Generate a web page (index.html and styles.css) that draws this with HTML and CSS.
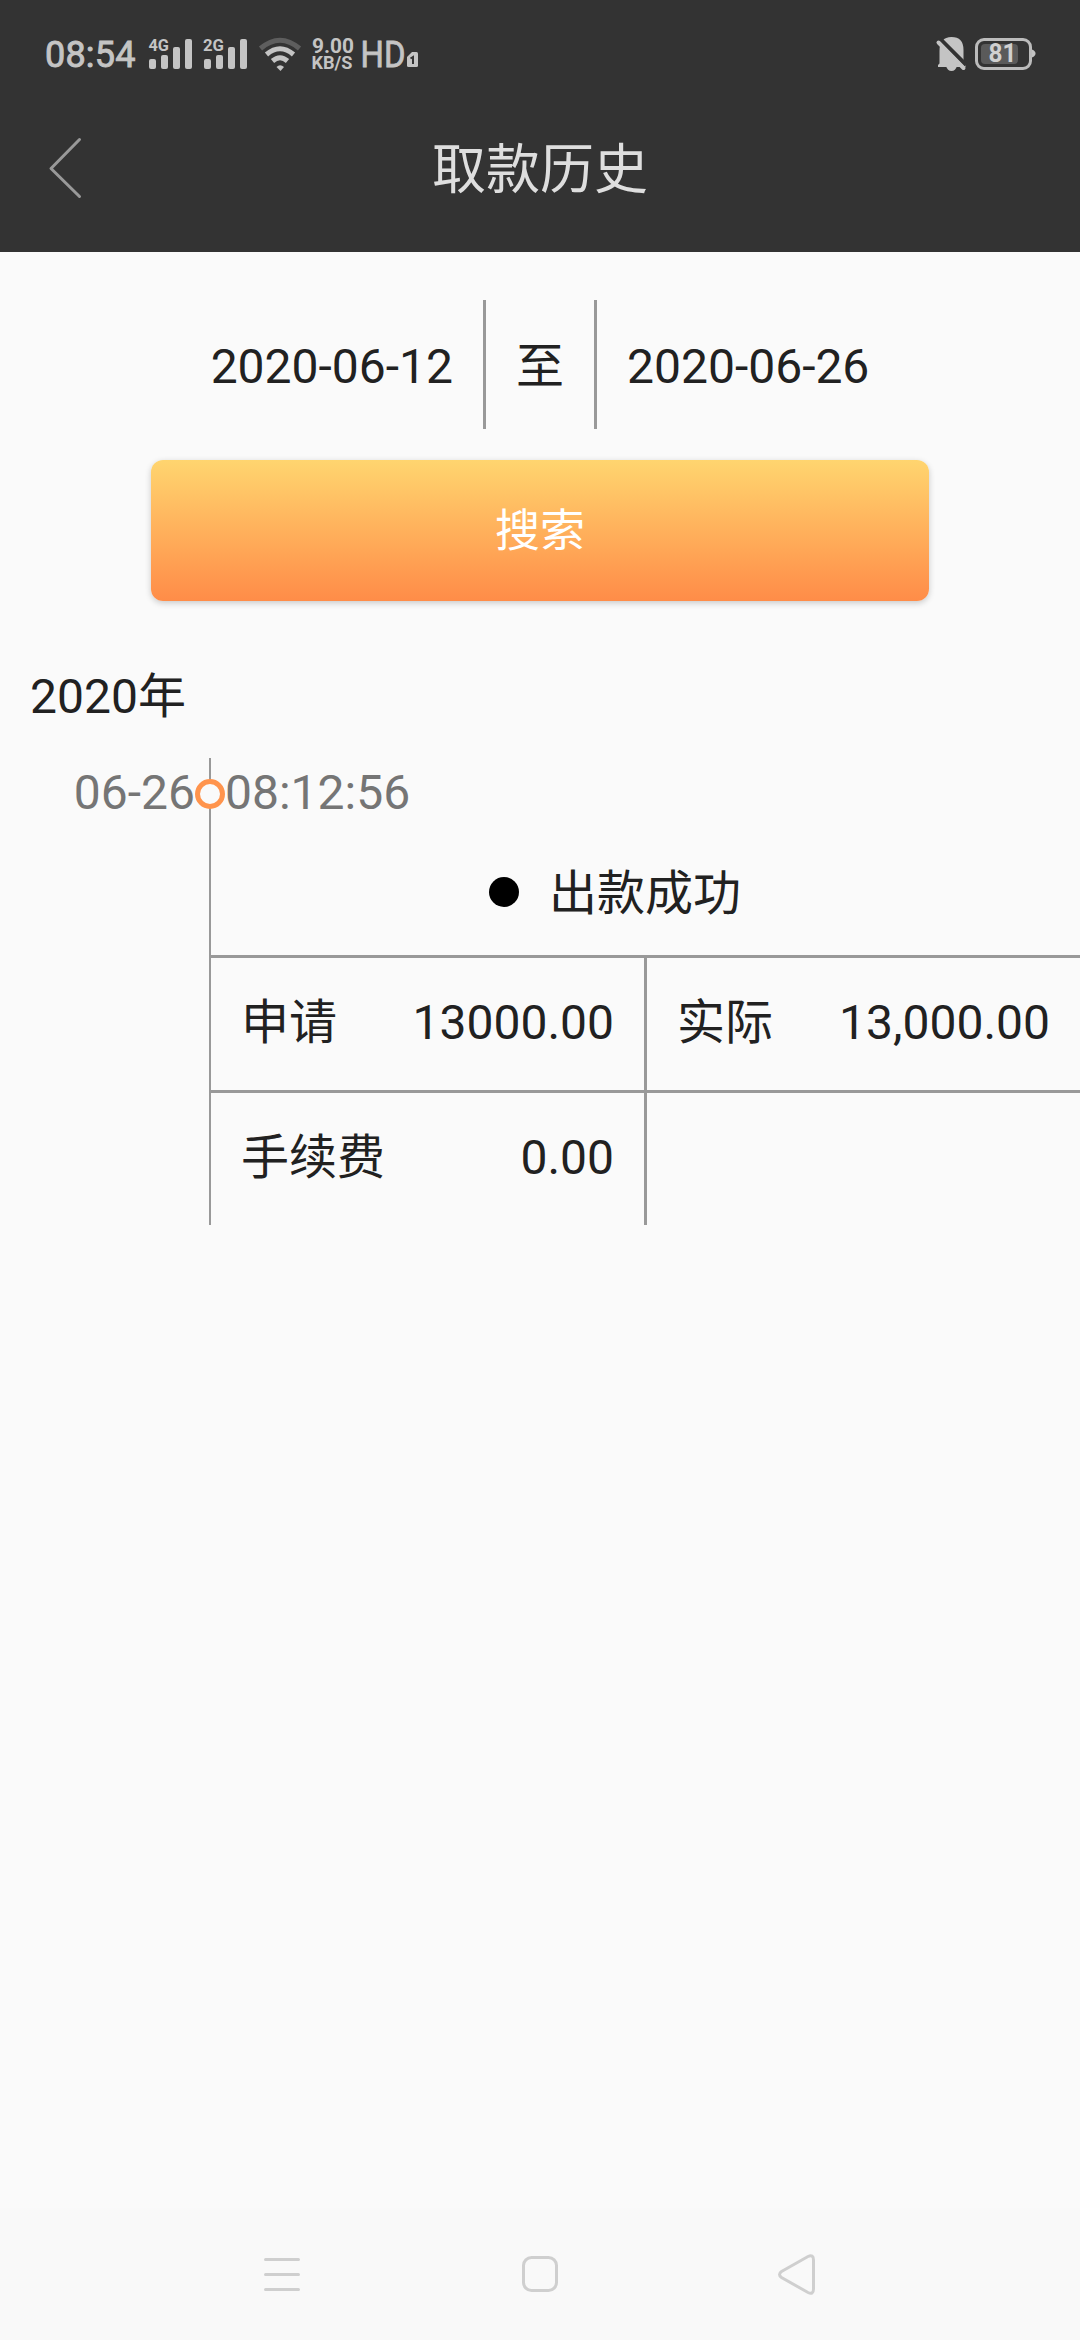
FILE: index.html
```html
<!DOCTYPE html>
<html lang="zh-CN">
<head>
<meta charset="utf-8">
<title>取款历史</title>
<link rel="stylesheet" href="styles.css">
</head>
<body>
<div class="screen">
  <header class="header">
    <div class="status-bar">
      <span class="clock">08:54</span>
      <svg class="signal" width="54" height="84" viewBox="145 0 54 84">
        <text class="net" x="148.500" y="51" textLength="20.500" lengthAdjust="spacingAndGlyphs">4G</text>
        <rect x="149" y="59" width="7" height="10" rx="2"/><rect x="161" y="55" width="7" height="14" rx="2"/><rect x="173" y="47" width="7" height="22" rx="2"/><rect x="185" y="39" width="7" height="30" rx="2"/>
      </svg>
      <svg class="signal" width="54" height="84" viewBox="144 0 54 84">
        <text class="net" x="148" y="51" textLength="21" lengthAdjust="spacingAndGlyphs">2G</text>
        <rect x="149" y="59" width="7" height="10" rx="2"/><rect x="161" y="55" width="7" height="14" rx="2"/><rect x="173" y="47" width="7" height="22" rx="2"/><rect x="185" y="39" width="7" height="30" rx="2"/>
      </svg>
      <svg class="wifi" width="54" height="84" viewBox="253 0 54 84">
        <path class="wifi-dim" d="M260.500 48.500Q280 32 299.500 48.500"/>
        <path class="wifi-arc" d="M266.500 54.500Q280 43 293.500 54.500"/>
        <path class="wifi-arc" d="M272.500 61Q280 54.500 287.500 61"/>
        <path d="M276.500 67Q280 63.500 284 67L280.500 71Z"/>
      </svg>
      <svg class="speed" width="50" height="84" viewBox="307 0 50 84">
        <text class="rate" x="312" y="53" textLength="42" lengthAdjust="spacingAndGlyphs">9.00</text>
        <text class="unit" x="311.500" y="69" textLength="41" lengthAdjust="spacingAndGlyphs">KB/S</text>
      </svg>
      <svg class="volte" width="66" height="84" viewBox="357 0 66 84">
        <text class="hd" x="360.500" y="67" textLength="45" lengthAdjust="spacingAndGlyphs">HD</text>
        <path d="M412 52H416.500Q418 52 418 53.500V65.500Q418 67 416.500 67H408.500Q407 67 407 65.500V57Z"/>
        <path class="sim" d="M410.500 58.500L413 57V64"/>
      </svg>
      <svg class="bell" width="37" height="84" viewBox="934 0 37 84">
        <path d="M939.500 63.500V51Q939.500 37 951.500 37Q963.500 37 963.500 50V63L965.500 65.500V67H938V65Z"/>
        <path d="M946 66H957Q955.500 71 951.500 71Q947.500 71 946 66Z"/>
        <path class="cut" d="M939 38L966 65"/>
        <path class="slash" d="M938.500 42.500L963.500 68"/>
      </svg>
      <svg class="battery" width="69" height="84" viewBox="971 0 69 84">
        <rect class="case" x="976.500" y="39.500" width="54" height="29" rx="7.500"/>
        <rect class="charge" x="981" y="44" width="37" height="20" rx="4"/>
        <path d="M1032 49.500Q1035.500 51 1035.500 53.500Q1035.500 56 1032 57.500Z"/>
        <text class="level" x="988.500" y="62" textLength="28" lengthAdjust="spacingAndGlyphs">81</text>
      </svg>
    </div>
    <div class="app-bar">
      <svg class="back" width="36" height="64" viewBox="0 0 36 64"><path d="M32.500 3.500L4 32.500L32.500 60.500"/></svg>
      <h1 class="title">取款历史</h1>
    </div>
  </header>
  <main class="content">
    <div class="range">
      <span class="date">2020-06-12</span>
      <span class="to">至</span>
      <span class="date">2020-06-26</span>
    </div>
    <button class="search">搜索</button>
    <h2 class="year">2020年</h2>
    <section class="record">
      <div class="moment">
        <span class="day">06-26</span>
        <span class="rail"><span class="node"></span></span>
        <span class="time">08:12:56</span>
      </div>
      <div class="detail">
        <div class="state"><span class="dot"></span><span class="state-text">出款成功</span></div>
        <div class="grid">
          <div class="cell"><span>申请</span><span>13000.00</span></div>
          <div class="cell"><span>实际</span><span>13,000.00</span></div>
          <div class="cell"><span>手续费</span><span>0.00</span></div>
          <div class="cell"></div>
        </div>
      </div>
    </section>
  </main>
  <nav class="nav-bar">
    <svg width="44" height="44" viewBox="-4 -4 44 44"><path d="M1.500 3.500H34.500M1.500 18.500H34.500M1.500 33.500H34.500"/></svg>
    <svg width="44" height="44" viewBox="-4 -4 44 44"><rect x="1.500" y="1.500" width="33" height="33" rx="8"/></svg>
    <svg width="44" height="44" viewBox="-3 -4 44 44"><path d="M2.500 15.500L29 .500Q34.500-2 34.500 4V33Q34.500 39 29 36.500L2.500 21.500Q-1.500 18.500 2.500 15.500Z"/></svg>
  </nav>
</div>
</body>
</html>
```
FILE: styles.css
```css
* { box-sizing: border-box; }

body {
  margin: 0;
  font-family: Roboto, "Noto Sans CJK SC", sans-serif;
  font-size: 48px;
  line-height: 56px;
  color: #212121;
  background: #fafafa;
}

.screen {
  width: 1080px;
  height: 2340px;
  display: flex;
  flex-direction: column;
}

.header { background: #333; height: 252px; }

.status-bar {
  height: 84px;
  display: flex;
  padding: 0 40px 0 45px;
  color: #c4c4c4;
  fill: #c4c4c4;
}
.clock { width: 100px; font-size: 36px; line-height: 111px; letter-spacing: .2px; -webkit-text-stroke: .9px #c4c4c4; }
.bell { margin-left: auto; }
.net { font-size: 17px; font-weight: 700; }
.rate { font-size: 20px; font-weight: 700; }
.unit { font-size: 18px; font-weight: 700; }
.hd { font-size: 36px; stroke: #c4c4c4; stroke-width: .8px; }
.level { font-size: 25px; font-weight: 700; fill: #d0d0d0; }
.wifi-arc, .wifi-dim { fill: none; stroke: #c4c4c4; stroke-width: 5; }
.wifi-dim { stroke: #5e5e5e; }
.sim { fill: none; stroke: #333; stroke-width: 2; }
.cut { stroke: #333; stroke-width: 4.500; }
.slash { stroke: #c4c4c4; stroke-width: 4; stroke-linecap: round; }
.case { fill: none; stroke: #bcbcbc; stroke-width: 3; }
.charge { fill: #5a5a5a; }

.app-bar {
  height: 168px;
  display: grid;
  grid-template-columns: 132px 1fr 132px;
  align-items: center;
}
.back { margin-left: 47px; fill: none; stroke: #999; stroke-width: 3; stroke-linecap: round; stroke-linejoin: round; }
.title {
  margin: 0;
  padding-top: 5px;
  text-align: center;
  font-size: 54px;
  font-weight: 400;
  color: #dedede;
}

.content { flex: 1; padding-top: 48px; }

.range { display: flex; justify-content: center; height: 129px; line-height: 133px; }
.date { padding: 0 30px; }
.to { border: solid #999; border-width: 0 3px; padding: 0 30px; }

.search {
  display: block;
  width: 778px;
  height: 141px;
  margin: 31px auto 0;
  padding: 2px 0 0;
  border: 0;
  border-radius: 12px;
  background: linear-gradient(#ffd56f, #ff8c48);
  box-shadow: 0 2px 6px rgba(0, 0, 0, .2);
  color: #fff;
  font: 45px/56px Roboto, "Noto Sans CJK SC", sans-serif;
}

.year { margin: 68px 0 0 30px; font-size: 48px; font-weight: 400; line-height: 56px; }

.record { margin-top: 33px; }
.moment { display: grid; grid-template-columns: 195px 30px 1fr; height: 72px; color: #757575; line-height: 70px; }
.day { text-align: right; }
.rail {
  display: flex;
  justify-content: center;
  padding-top: 21px;
  background: linear-gradient(#999, #999) 14px 0 / 2px 100% no-repeat;
}
.node { width: 30px; height: 30px; border: 5px solid #ff944d; border-radius: 50%; background: #fafafa; }

.detail { margin-left: 209px; border-left: 2px solid #999; }
.state {
  display: flex;
  align-items: center;
  gap: 30px;
  height: 128px;
  padding: 0 0 2px 278px;
  border-bottom: 3px solid #999;
}
.state-text { padding-top: 5px; }
.dot { width: 30px; height: 30px; border-radius: 50%; background: #000; }
.grid { display: grid; grid-template-columns: 436px 1fr; grid-template-rows: 135px 132px; }
.cell { display: flex; justify-content: space-between; padding: 0 30px; line-height: 130px; }
.cell:nth-child(odd) { border-right: 3px solid #999; }
.cell:nth-child(-n+2) { border-bottom: 3px solid #999; }

.nav-bar {
  height: 132px;
  display: flex;
  justify-content: center;
  align-items: center;
  gap: 214px;
  background: #f9f9f9;
  fill: none;
  stroke: #cfcfcf;
  stroke-width: 3;
  stroke-linecap: round;
}
```
